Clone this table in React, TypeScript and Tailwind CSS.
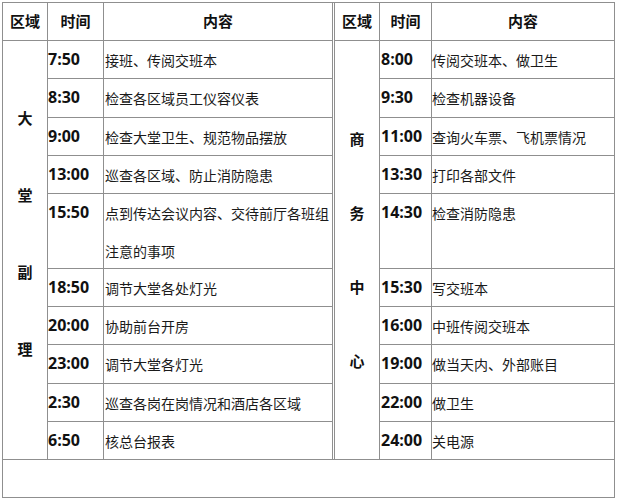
const cjk = "font-['Noto_Sans_CJK_SC','Noto_Sans',sans-serif]";
const num = "font-['Open_Sans','Liberation_Sans',sans-serif]";

type Row = { time: string; text: React.ReactNode };

const left: Row[] = [
  { time: "7:50", text: "接班、传阅交班本" },
  { time: "8:30", text: "检查各区域员工仪容仪表" },
  { time: "9:00", text: "检查大堂卫生、规范物品摆放" },
  { time: "13:00", text: "巡查各区域、防止消防隐患" },
  {
    time: "15:50",
    text: (
      <>
        点到传达会议内容、交待前厅各班组
        <br />
        注意的事项
      </>
    ),
  },
  { time: "18:50", text: "调节大堂各处灯光" },
  { time: "20:00", text: "协助前台开房" },
  { time: "23:00", text: "调节大堂各灯光" },
  { time: "2:30", text: "巡查各岗在岗情况和酒店各区域" },
  { time: "6:50", text: "核总台报表" },
];

const right: Row[] = [
  { time: "8:00", text: "传阅交班本、做卫生" },
  { time: "9:30", text: "检查机器设备" },
  { time: "11:00", text: "查询火车票、飞机票情况" },
  { time: "13:30", text: "打印各部文件" },
  { time: "14:30", text: "检查消防隐患" },
  { time: "15:30", text: "写交班本" },
  { time: "16:00", text: "中班传阅交班本" },
  { time: "19:00", text: "做当天内、外部账目" },
  { time: "22:00", text: "做卫生" },
  { time: "24:00", text: "关电源" },
];

function Header() {
  const h = `bg-white ${cjk} text-[15px] font-bold text-[#111] flex items-center justify-center`;
  return (
    <>
      <div className={h}>区域</div>
      <div className={h}>时间</div>
      <div className={h}>内容</div>
    </>
  );
}

function Area({ chars, pad, step }: { chars: string[]; pad: string; step: string }) {
  return (
    <div className={`row-span-10 bg-white ${pad} flex flex-col items-center ${cjk} text-[15px] font-bold text-[#111]`}>
      {chars.map(c => (
        <div key={c} className={`${step} flex items-center`}>
          {c}
        </div>
      ))}
    </div>
  );
}

export default function App() {
  const timeCls = `bg-white ${num} font-bold text-[16px] leading-[37px] text-[#111] whitespace-nowrap`;
  const textCls = `bg-white ${cjk} text-[14px] leading-[38px] text-[#1a1a1a] whitespace-nowrap`;
  return (
    <div className="w-[617px] h-[500px] bg-white pl-[2px] pt-[2px]">
      <div className="w-[613px] bg-[#8f8f8f] p-px grid gap-px grid-cols-[44px_55px_228px_1px_44px_51px_182px] grid-rows-[37px_37px_38px_37px_37px_74px_37px_37px_38px_37px_37px_37px]">
        <Header />
        <div className="row-span-11 bg-white" />
        <Header />
        <Area chars={["大", "堂", "副", "理"]} pad="pt-[39px]" step="h-[77px]" />
        <div className={timeCls}>{left[0].time}</div>
        <div className={`${textCls} pl-px`}>{left[0].text}</div>
        <Area chars={["商", "务", "中", "心"]} pad="pt-[61px]" step="h-[74px]" />
        <div className={`${timeCls} pl-px`}>{right[0].time}</div>
        <div className={textCls}>{right[0].text}</div>
        {left.slice(1).map((l, i) => {
          const r = right[i + 1];
          return [
            <div key={`lt${i}`} className={timeCls}>{l.time}</div>,
            <div key={`lx${i}`} className={`${textCls} pl-px`}>{l.text}</div>,
            <div key={`rt${i}`} className={`${timeCls} pl-px`}>{r.time}</div>,
            <div key={`rx${i}`} className={textCls}>{r.text}</div>,
          ];
        })}
        <div className="col-span-7 bg-white" />
      </div>
    </div>
  );
}
